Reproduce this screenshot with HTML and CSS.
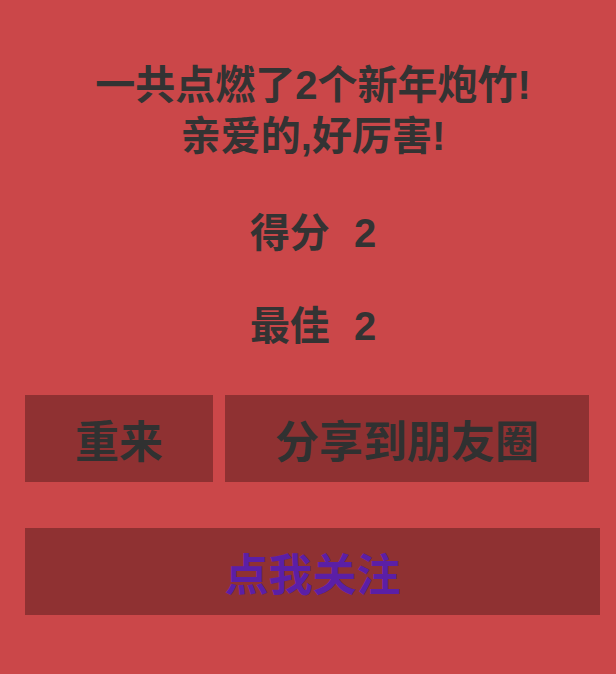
FILE: index.html
```html
<!DOCTYPE html>
<html lang="zh-CN">
<head>
<meta charset="utf-8">
<title>新年炮竹</title>
<link rel="stylesheet" href="styles.css">
</head>
<body>
<main class="page">
  <section class="result">
    <p class="line">一共点燃了2个新年炮竹!</p>
    <p class="line">亲爱的,好厉害!</p>
  </section>
  <section class="scores">
    <div class="score">得分<span class="num">2</span></div>
    <div class="score">最佳<span class="num">2</span></div>
  </section>
  <div class="actions">
    <button class="btn">重来</button>
    <button class="btn">分享到朋友圈</button>
  </div>
  <button class="btn follow">点我关注</button>
</main>
</body>
</html>
```

FILE: styles.css
```css
html, body {
  margin: 0;
  padding: 0;
  background: #cb4749;
}
body {
  font-family: "Liberation Sans", "Noto Sans CJK SC", sans-serif;
  font-weight: bold;
  color: #333333;
}
.page {
  padding: 60px 0 0 0;
  width: 616px;
}
.result {
  text-align: center;
  font-size: 40px;
  line-height: 51px;
  padding-left: 10px;
}
.line {
  margin: 0;
}
.scores {
  margin-top: 25px;
  text-align: center;
  font-size: 40px;
  line-height: 93px;
  padding-left: 10px;
}
.num {
  margin-left: 24px;
}
.actions {
  margin: 22px 0 0 25px;
  display: grid;
  grid-template-columns: 188px 364px;
  column-gap: 12px;
}
.btn {
  display: block;
  height: 87px;
  border: none;
  padding: 0;
  margin: 0;
  background: #8f3132;
  color: #303131;
  font-family: "Liberation Sans", "Noto Sans CJK SC", sans-serif;
  font-weight: bold;
  font-size: 44px;
  text-align: center;
}
.follow {
  margin: 46px 0 0 25px;
  width: 575px;
  color: #5b1fa6;
}
```
